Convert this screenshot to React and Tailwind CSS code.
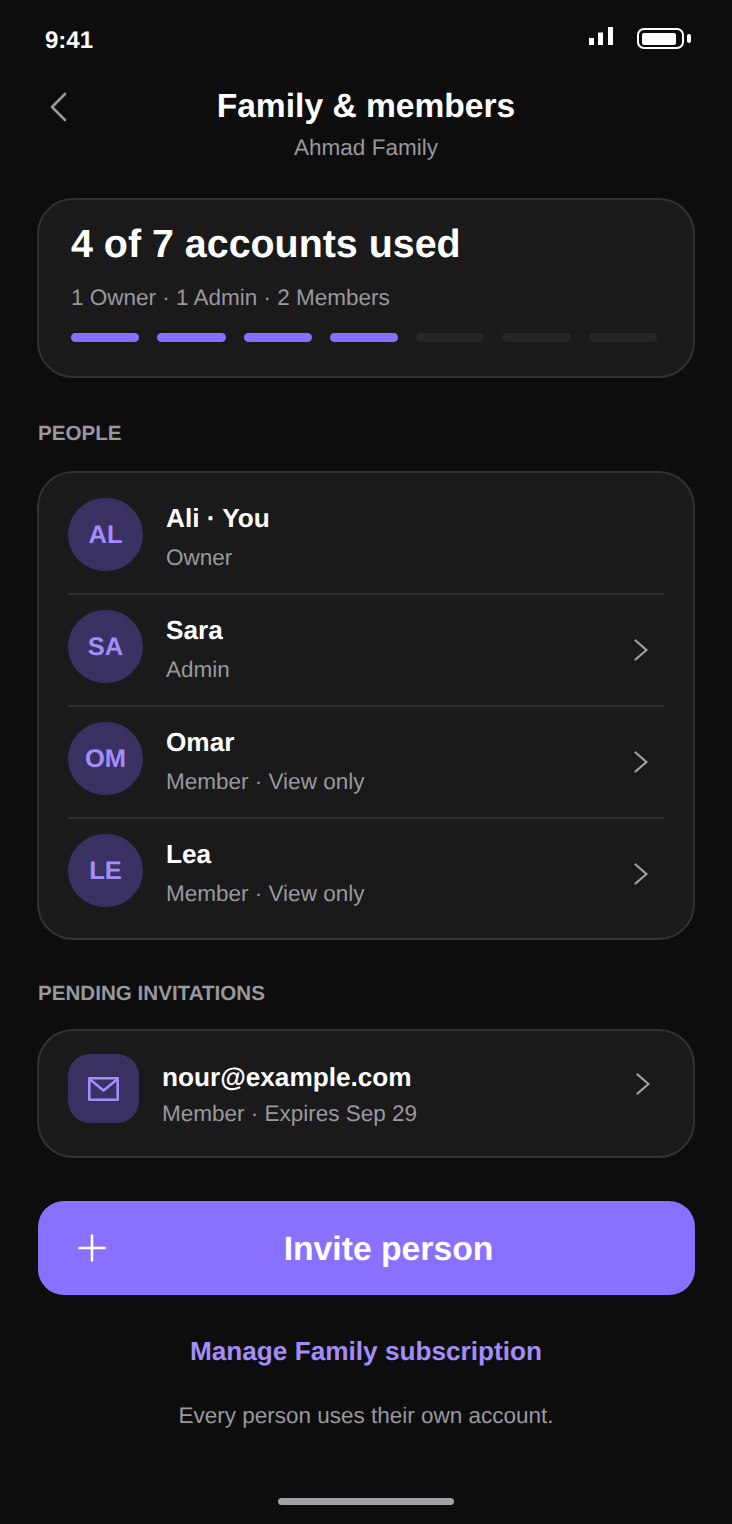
import React from "react";

const Chevron = ({ className = "" }) => (
  <svg width="14" height="22" viewBox="0 0 14 22" fill="none" stroke="#a1a1a6" strokeWidth="2.2" strokeLinecap="round" strokeLinejoin="round" className={`shrink-0 ${className}`}>
    <path d="M1.5 1.5 L12.5 11 L1.5 20.5" />
  </svg>
);

const Person = ({ initials, name, role, chevron = true, divider = true }) => (
  <div className={`flex h-[112px] items-center border-b-2 pr-[16px] pb-[8px] ${divider ? "border-[#303032]" : "border-transparent"}`}>
    <div className="flex h-[73px] w-[75px] shrink-0 items-center justify-center rounded-full bg-[#3a3163] pt-[2px] text-[25.5px] font-bold text-[#a48dfb]">
      {initials}
    </div>
    <div className="mt-[4px] ml-[23px] flex-1">
      <div className="text-[26.2px] leading-[32px] font-bold text-white">{name}</div>
      <div className="mt-[11px] text-[22.5px] leading-[26px] text-[#98989d]">{role}</div>
    </div>
    {chevron && <Chevron className="mt-[8px]" />}
  </div>
);

export default function App() {
  return (
    <div className="flex h-[1524px] w-[732px] flex-col overflow-hidden bg-[#0d0d0e] font-['Liberation_Sans',Arial,sans-serif] [text-rendering:geometricPrecision]">
      <div className="flex h-[53px] items-start justify-between pt-[27px] pr-[40px] pl-[45px]">
        <span className="mt-[1px] text-[24px] leading-[26px] font-bold text-white">9:41</span>
        <div className="flex items-start gap-[24px]">
          <svg width="24" height="18" viewBox="0 0 24 18" fill="white">
            <rect x="0" y="11" width="5" height="7" />
            <rect x="9" y="5.5" width="5" height="12.5" />
            <rect x="19" y="0" width="5" height="18" />
          </svg>
          <svg width="55" height="21" viewBox="0 0 55 21" fill="none" className="mt-[1px]">
            <rect x="1" y="1" width="45" height="19" rx="6" stroke="white" strokeWidth="2" />
            <rect x="5" y="5" width="34" height="12" rx="2" fill="white" />
            <rect x="50" y="6" width="4" height="9" rx="2" fill="white" />
          </svg>
        </div>
      </div>

      <div className="relative mt-[34px] flex flex-col items-center">
        <svg width="20" height="30" viewBox="0 0 20 30" fill="none" stroke="#98989d" strokeWidth="2.6" strokeLinecap="round" strokeLinejoin="round" className="absolute top-[5px] left-[49px]">
          <path d="M16 2 L3 15 L16 28" />
        </svg>
        <div className="text-[33.6px] leading-[40px] font-bold text-white">Family &amp; members</div>
        <div className="mt-[8px] text-[22.5px] leading-[26px] text-[#98989d]">Ahmad Family</div>
      </div>

      <div className="mx-[37px] mt-[37px] h-[180px] rounded-[36px] border-2 border-[#323234] bg-[#1a1a1b] px-[32px] pt-[21px]">
        <div className="text-[39.4px] leading-[46px] font-bold text-white">4 of 7 accounts used</div>
        <div className="mt-[18px] text-[22.5px] leading-[26px] text-[#98989d]">1 Owner · 1 Admin · 2 Members</div>
        <div className="mt-[22px] flex gap-[18px] pr-[4px]">
          {[1, 2, 3, 4].map((i) => (
            <div key={i} className="h-[9px] flex-1 rounded-full bg-[#8570ff]" />
          ))}
          {[5, 6, 7].map((i) => (
            <div key={i} className="h-[9px] flex-1 rounded-full bg-[#262628]" />
          ))}
        </div>
      </div>

      <div className="mt-[44px] ml-[38px] text-[20.6px] leading-[24px] font-bold text-[#98989d]">PEOPLE</div>
      <div className="mx-[37px] mt-[25px] h-[469px] rounded-[36px] border-2 border-[#323234] bg-[#1a1a1b] px-[29px] pt-[10px]">
        <Person initials="AL" name="Ali · You" role="Owner" chevron={false} />
        <Person initials="SA" name="Sara" role="Admin" />
        <Person initials="OM" name="Omar" role="Member · View only" />
        <Person initials="LE" name="Lea" role="Member · View only" divider={false} />
      </div>

      <div className="mt-[42px] ml-[38px] text-[20.6px] leading-[24px] font-bold text-[#98989d]">PENDING INVITATIONS</div>
      <div className="mx-[37px] mt-[23px] flex h-[129px] items-start rounded-[36px] border-2 border-[#323234] bg-[#1a1a1b] pt-[23px] pr-[43px] pl-[29px]">
        <div className="flex h-[69px] w-[71px] shrink-0 items-center justify-center rounded-[22px] bg-[#3a3163]">
          <svg width="31" height="24" viewBox="0 0 31 24" fill="none" stroke="#a48dfb" strokeWidth="2.6" strokeLinejoin="round" strokeLinecap="round">
            <rect x="1.3" y="1.3" width="28.4" height="21.4" />
            <path d="M2 2.5 L15.5 13.5 L29 2.5" />
          </svg>
        </div>
        <div className="mt-[7px] ml-[23px] flex-1">
          <div className="text-[26.2px] leading-[32px] font-bold text-white">nour@example.com</div>
          <div className="mt-[8px] text-[22.5px] leading-[26px] text-[#98989d]">Member · Expires Sep 29</div>
        </div>
        <Chevron className="mt-[19px]" />
      </div>

      <div className="relative mt-[43px] mr-[37px] ml-[38px] flex h-[94px] items-center justify-center rounded-[26px] bg-[#8a70ff] pt-[2px] pl-[44px]">
        <svg width="28" height="28" viewBox="0 0 28 28" fill="none" stroke="white" strokeWidth="2.6" strokeLinecap="round" className="absolute top-[33px] left-[40px]">
          <path d="M14 1.5 V26.5 M1.5 14 H26.5" />
        </svg>
        <span className="text-[33.7px] leading-[40px] font-bold text-white">Invite person</span>
      </div>

      <div className="mt-[40px] text-center text-[26.2px] leading-[32px] font-bold text-[#a48dfb]">Manage Family subscription</div>
      <div className="mt-[36px] text-center text-[22.5px] leading-[26px] text-[#98989d]">Every person uses their own account.</div>

      <div className="mt-[69px] flex justify-center">
        <div className="h-[7px] w-[176px] rounded-full bg-[#a1a1a6]" />
      </div>
    </div>
  );
}
